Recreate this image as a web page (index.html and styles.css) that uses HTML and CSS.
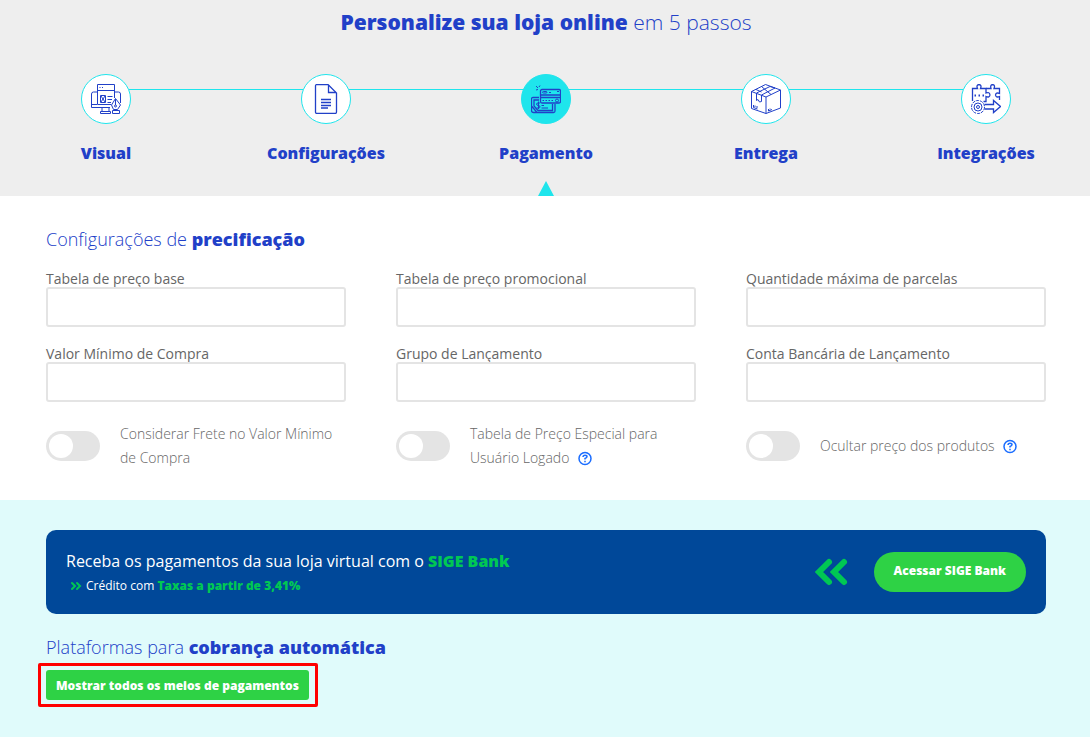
FILE: index.html
```
<!DOCTYPE html>
<html lang="pt-BR">

<head>
    <meta charset="UTF-8">
    <meta name="viewport" content="width=device-width, initial-scale=1.0">
    <title>Personalize sua loja online</title>
    <link rel="stylesheet" href="styles.css">
</head>

<body>
    <header class="topo">
        <h1 class="titulo"><strong>Personalize sua loja online</strong> em 5 passos</h1>
        <nav class="passos">
            <a class="passo" href="#visual">
                <span class="circulo">
                    <svg viewBox="0 0 30 30" class="icone">
                        <path d="M6 8H2.5Q.5 8 .5 10V23.500H19M24 8H27.500Q29.500 8 29.500 10V19M.5 20.500H6M11 24V27M18 24V27M9.500 29.500H19.500V27.500H9.500Z" />
                        <path d="M20 20.500H6.500V.500H23.500V14M6.500 6.500H23.500M8.500 3.500H9.500M11 3.500H12M9.500 11.500H14.500V18.500H9.500ZM10 12L14 18M14 12L10 18M16.500 12.500H21.500M16.500 15.500H21M16.500 18.500H20" />
                        <path class="fundo" d="M24.500 14.500L20.500 21L22.500 25.500H26.500L29.500 21Z" />
                        <path class="fundo" d="M21.500 26.500H28.500V29.500H21.500Z" />
                        <path d="M24.500 15V21" />
                        <circle cx="24.500" cy="22" r="1" />
                    </svg>
                </span>
                <span class="nome">Visual</span>
            </a>
            <a class="passo" href="#configuracoes">
                <span class="circulo">
                    <svg viewBox="0 0 30 30" class="icone">
                        <path class="forte" d="M6 .500H17L25.500 9V28Q25.500 29.500 24 29.500H6Q4.500 29.500 4.500 28V2Q4.500 .500 6 .500Z" />
                        <path class="forte" d="M17.500 1V8.500H25M10 15.500H20M10 18.500H20M10 21.500H20M10 24H17" />
                    </svg>
                </span>
                <span class="nome">Configurações</span>
            </a>
            <a class="passo ativo" href="#pagamento">
                <span class="circulo">
                    <svg viewBox="0 0 30 30" class="icone">
                        <path class="forte" d="M8 13.500H2Q.5 13.500 .5 15V26.500Q.5 28.500 2.500 28.500H22.500Q24 28.500 24 27V20M8 16H3V22L7 26.500H21.500V20M1 22.500L6 28.500" />
                        <path d="M7.500 17.500V25M9 19H7Q5.500 19 5.500 20Q5.500 21.500 7.500 21.500Q9 21.500 9 23Q9 24 7.500 24H5.500M10.500 21.500H13M10.500 24H17" />
                        <rect class="forte" x="9.500" y="5.500" width="20" height="13.500" rx="1.500" />
                        <path class="forte" d="M10 11H29M10 13.500H29" />
                        <rect x="11.500" y="7.500" width="4.500" height="1.500" rx="1" />
                        <path d="M18 8.500H20M26 7.500H28M11.500 16.500H13M14.500 16.500H16M17.500 16.500H19M20.500 16.500H22" />
                        <circle cx="26" cy="16.500" r="1.500" />
                        <path d="M5 2L7 4M9 1.500L8 3M5 6L7 5.500" />
                    </svg>
                </span>
                <span class="nome">Pagamento</span>
            </a>
            <a class="passo" href="#entrega">
                <span class="circulo">
                    <svg viewBox="0 0 30 30" class="icone">
                        <path d="M.5 7.500L14.500 .500L29.500 6V24L15 29.500L.5 24.500Z" />
                        <path d="M.5 7.500L15 13L29.500 6M15 13V29.500M5.500 9L19 2.500L24 4L10.500 11M5.500 9V16.500L7 15.500L8.500 18L10.500 17.500V11M5 5.500L10.500 8M10.500 2.500L20 10.500" />
                        <path d="M2.500 21V23.500L6.500 25M4 21.500V23M6 22V24M17.500 25V27L21 25.500M19 24.500V25.500" />
                    </svg>
                </span>
                <span class="nome">Entrega</span>
            </a>
            <a class="passo" href="#integracoes">
                <span class="circulo">
                    <svg viewBox="0 0 30 30" class="icone">
                        <path class="forte" d="M1.500 17V4.500H6.500Q5 1 8 .500Q11 1 9.500 4.500H15V9Q18.500 7.500 19 11Q18.500 14 15 12.500V17.500H12.500" />
                        <path class="forte" d="M15 4.500H20Q19 1 21.500 .500Q24.500 1 23 4.500H28.500V9.500Q25 8 24.500 11Q25 14 28.500 12.500V16" />
                        <path d="M3.500 11.500H5M7.500 11.500H9M11.500 11.500H13" stroke-width="2" />
                        <path class="forte" d="M13.500 20.500H22.500V16.500L29.500 22.500L22.500 28.500V25H13.500" />
                        <circle cx="7" cy="23" r="6.500" stroke-dasharray="3 1" />
                        <circle cx="7" cy="23" r="4" />
                        <circle cx="7" cy="23" r="1.500" />
                    </svg>
                </span>
                <span class="nome">Integrações</span>
            </a>
        </nav>
    </header>

    <form class="precificacao">
        <h2 class="subtitulo">Configurações de <strong>precificação</strong></h2>
        <div class="campos">
            <div class="campo">
                <label for="tabelaBase">Tabela de preço base</label>
                <input type="text" id="tabelaBase">
            </div>
            <div class="campo">
                <label for="tabelaPromo">Tabela de preço promocional</label>
                <input type="text" id="tabelaPromo">
            </div>
            <div class="campo">
                <label for="parcelas">Quantidade máxima de parcelas</label>
                <input type="text" id="parcelas">
            </div>
            <div class="campo">
                <label for="valorMinimo">Valor Mínimo de Compra</label>
                <input type="text" id="valorMinimo">
            </div>
            <div class="campo">
                <label for="grupo">Grupo de Lançamento</label>
                <input type="text" id="grupo">
            </div>
            <div class="campo">
                <label for="conta">Conta Bancária de Lançamento</label>
                <input type="text" id="conta">
            </div>
        </div>
        <div class="opcoes">
            <div class="opcao">
                <input type="checkbox" class="chave" id="frete">
                <label for="frete">Considerar Frete no Valor Mínimo de Compra</label>
            </div>
            <div class="opcao">
                <input type="checkbox" class="chave" id="especial">
                <label for="especial">Tabela de Preço Especial para Usuário Logado
                    <svg viewBox="0 0 14 14" class="ajuda">
                        <circle cx="7" cy="6.500" r="6" />
                        <path d="M5 5Q5 3.300 7 3.300Q9 3.300 9 4.800Q9 5.800 7 6.500V7.500M7 8.700V10.200" />
                    </svg>
                </label>
            </div>
            <div class="opcao">
                <input type="checkbox" class="chave" id="ocultar">
                <label for="ocultar">Ocultar preço dos produtos
                    <svg viewBox="0 0 14 14" class="ajuda">
                        <circle cx="7" cy="6.500" r="6" />
                        <path d="M5 5Q5 3.300 7 3.300Q9 3.300 9 4.800Q9 5.800 7 6.500V7.500M7 8.700V10.200" />
                    </svg>
                </label>
            </div>
        </div>
    </form>

    <section class="cobranca">
        <div class="banner">
            <div class="banner-texto">
                <p class="chamada">Receba os pagamentos da sua loja virtual com o <strong>SIGE Bank</strong></p>
                <p class="taxas">
                    <svg viewBox="0 0 10 8" class="seta-pequena">
                        <path d="M1 1L4 4L1 7M6 1L9 4L6 7" />
                    </svg>
                    <span>Crédito com <strong>Taxas a partir de 3,41%</strong></span>
                </p>
            </div>
            <svg viewBox="0 0 32 26" class="seta-grande">
                <path d="M14 3L4 13L14 23M29 3L19 13L29 23" />
            </svg>
            <button type="button" class="botao-banco">Acessar SIGE Bank</button>
        </div>
        <h2 class="subtitulo">Plataformas para <strong>cobrança automática</strong></h2>
        <div class="destaque">
            <button type="button" class="botao">Mostrar todos os meios de pagamentos</button>
        </div>
    </section>
</body>

</html>
```
FILE: styles.css
```
* {
    box-sizing: border-box;
}

body {
    margin: 0;
    font-family: 'Open Sans', sans-serif;
    font-size: 14px;
    color: #666;
    background-color: #e0fbfb;
}

h1,
h2,
p {
    margin: 0;
}

/* Topo com os passos */
.topo {
    padding: 8px 44px 0 46px;
    background-color: #eee;
}

.titulo {
    font-size: 21px;
    line-height: 28px;
    font-weight: 300;
    text-align: center;
    color: #2140c8;
}

.titulo strong {
    font-weight: 800;
}

.passos {
    display: flex;
    justify-content: space-between;
    margin-top: 38px;
    /* linha que liga os círculos */
    background: linear-gradient(#1fe5ec, #1fe5ec) no-repeat 60px 15px / calc(100% - 120px) 1px;
}

.passo {
    display: flex;
    flex-direction: column;
    align-items: center;
    width: 120px;
    height: 122px;
    color: #2140c8;
    text-decoration: none;
}

.circulo {
    display: flex;
    align-items: center;
    justify-content: center;
    width: 50px;
    height: 50px;
    border: 1px solid #1fe5ec;
    border-radius: 50%;
    background-color: #fff;
}

.icone {
    width: 30px;
    height: 30px;
    fill: none;
    stroke: #2140c8;
    stroke-width: 1;
}

.icone .forte {
    stroke-width: 1.3;
}

.icone .fundo {
    fill: #fff;
}

.nome {
    margin-top: 18px;
    font-size: 16px;
    line-height: 22px;
    font-weight: 800;
}

.ativo .circulo {
    background-color: #1fe5ec;
}

.ativo::after {
    content: "";
    margin-top: auto;
    border: 8px solid transparent;
    border-top: 0;
    border-bottom: 15px solid #1fe5ec;
}

.subtitulo {
    font-size: 18px;
    line-height: 24px;
    font-weight: 300;
    color: #2140c8;
}

.subtitulo strong {
    font-weight: 800;
}

/* Precificação */
.precificacao {
    padding: 31px 44px 30px 46px;
    background-color: #fff;
}

.campos,
.opcoes {
    display: grid;
    grid-template-columns: repeat(3, 1fr);
    column-gap: 50px;
}

.campos {
    row-gap: 18px;
    margin-top: 19px;
}

.campo {
    display: flex;
    flex-direction: column;
}

.campo label {
    line-height: 17px;
}

.campo input {
    width: 100%;
    height: 40px;
    padding: 0 10px;
    border: 2px solid #e4e4e4;
    border-radius: 3px;
    background-color: #fff;
    font: inherit;
}

.opcoes {
    margin-top: 20px;
}

.opcao {
    display: flex;
    align-items: center;
    gap: 20px;
    min-height: 48px;
}

.opcao label {
    font-weight: 300;
    line-height: 24px;
}

.chave {
    appearance: none;
    flex: none;
    width: 54px;
    height: 30px;
    margin: 0;
    padding: 3px;
    border-radius: 15px;
    background-color: #e4e4e4;
    cursor: pointer;
}

.chave::before {
    content: "";
    display: block;
    width: 24px;
    height: 24px;
    border-radius: 50%;
    background-color: #fff;
}

.chave:checked {
    background-color: #2ed245;
}

.chave:checked::before {
    margin-left: auto;
}

.ajuda {
    width: 14px;
    height: 14px;
    margin: 0 0 1px 5px;
    vertical-align: middle;
    overflow: visible;
    fill: none;
    stroke: #1a6dff;
    stroke-width: 1.5;
}

/* Cobrança */
.cobranca {
    padding: 30px 44px 30px 46px;
    background-color: #e0fbfb;
}

.banner {
    display: flex;
    align-items: center;
    min-height: 84px;
    margin-bottom: 21px;
    padding: 16px 20px;
    border-radius: 10px;
    background-color: #004899;
    color: #fff;
}

.banner-texto {
    flex: 1;
    padding-top: 2px;
}

.banner strong {
    font-weight: 800;
    color: #00c853;
}

.chamada {
    font-size: 16px;
    line-height: 26px;
}

.taxas {
    display: flex;
    align-items: center;
    gap: 5px;
    padding-left: 5px;
    font-size: 12px;
    line-height: 24px;
}

.seta-pequena {
    width: 10px;
    height: 8px;
    overflow: visible;
    fill: none;
    stroke: #00c853;
    stroke-width: 2;
    stroke-linecap: round;
}

.seta-grande {
    width: 32px;
    height: 26px;
    margin-right: 27px;
    overflow: visible;
    fill: none;
    stroke: #00c853;
    stroke-width: 6;
    stroke-linecap: round;
}

.botao-banco,
.botao {
    border: none;
    background-color: #2ed245;
    color: #fff;
    font-family: inherit;
    font-size: 12px;
    font-weight: 800;
    cursor: pointer;
}

.botao-banco {
    height: 40px;
    padding: 0 20px 4px;
    border-radius: 20px;
}

.destaque {
    width: fit-content;
    margin: 4px 0 0 -8px;
    padding: 4px 6px 4px 5px;
    border: 3px solid #f00;
    border-radius: 2px;
}

.botao {
    display: block;
    height: 30px;
    padding: 0 10px;
    border-radius: 3px;
}
```
